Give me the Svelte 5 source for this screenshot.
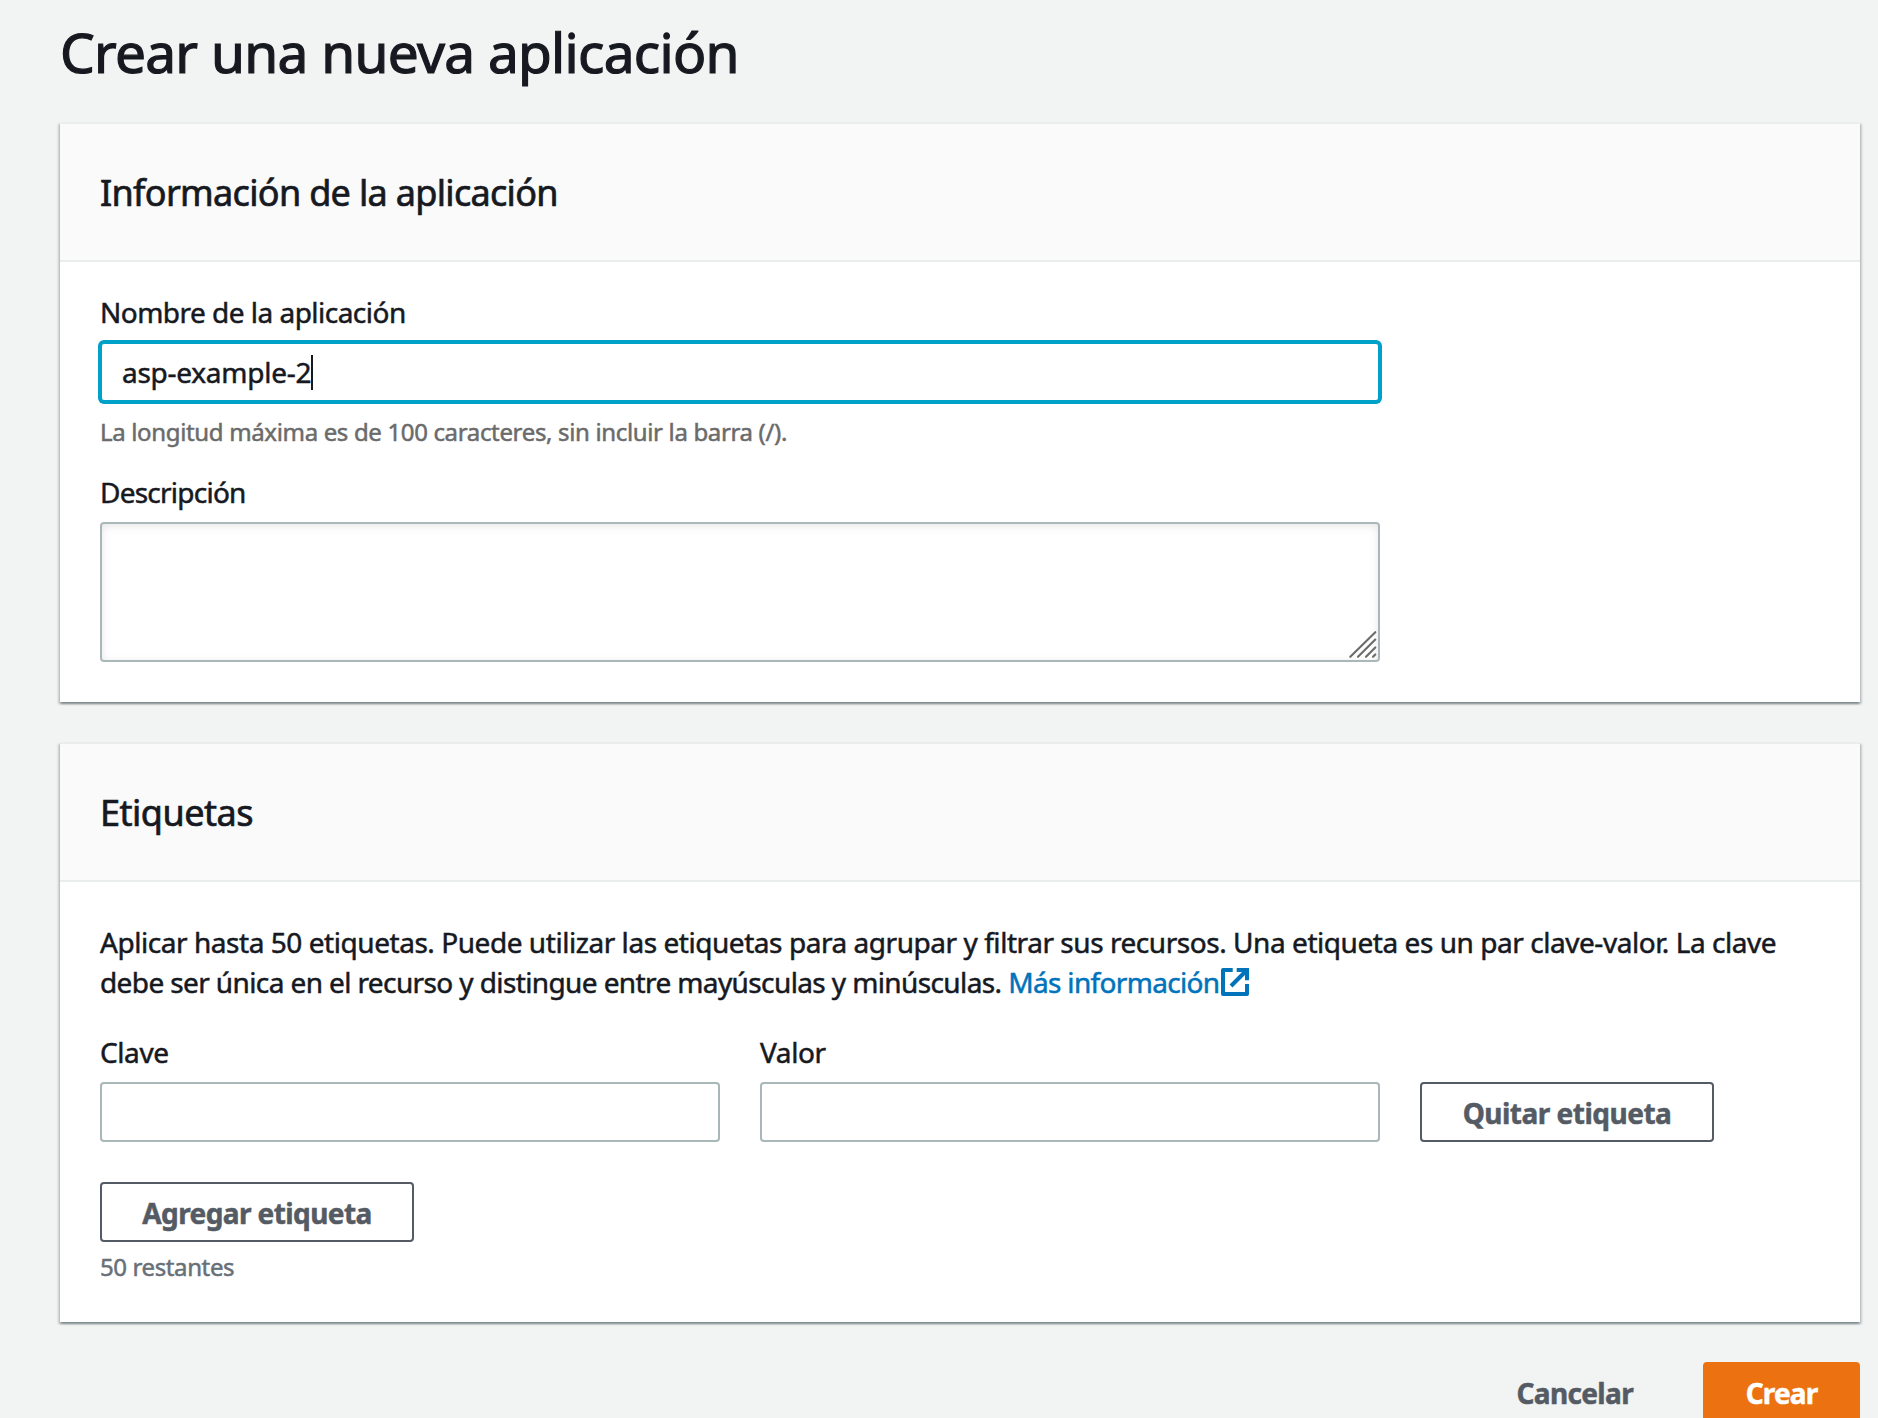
<script>
  let name = $state('asp-example-2');
  let description = $state('');
  let tags = $state([{ key: '', value: '' }]);
</script>

<main class="page">
  <h1>Crear una nueva aplicación</h1>

  <section class="card">
    <header><h2 class="info-title">Información de la aplicación</h2></header>
    <div class="body info-body">
      <div class="label">Nombre de la aplicación</div>
      <div class="input focused"><span class="typed">{name}</span><span class="caret"></span></div>
      <p class="hint limit">La longitud máxima es de 100 caracteres, sin incluir la barra (/).</p>
      <label class="label description" for="description">Descripción</label>
      <div class="textarea-wrap">
        <textarea id="description" bind:value={description}></textarea>
        <svg class="grip" viewBox="0 0 30 30" aria-hidden="true">
          <path d="M2.300 26.800 27.300 2.200M10 26.800 27.300 9.600M18 26.800 27.300 17.400M25 26.800l2.300-2.400" />
        </svg>
      </div>
    </div>
  </section>

  <section class="card">
    <header><h2>Etiquetas</h2></header>
    <div class="body tags-body">
      <p class="intro">
        <span class="line first">Aplicar hasta 50 etiquetas. Puede utilizar las etiquetas para agrupar y filtrar sus recursos. Una etiqueta es un par clave-valor. La clave</span>
        <span class="line second">debe ser única en el recurso y distingue entre mayúsculas y minúsculas. <a href="#info">Más información<svg class="external" viewBox="0 0 28 28" aria-hidden="true">
          <path class="frame" d="M11.7 0H2Q0 0 0 2v24q0 2 2 2h24q2 0 2-2V16h-4v8H4V4h7.700z" />
          <path class="frame" d="M15.700 0H28v12.300h-4V4h-8.300z" />
          <path class="shaft" d="M10 18 25.500 2.500" />
        </svg></a></span>
      </p>
      {#each tags as tag}
        <div class="tag-row">
          <label><span class="label short">Clave</span><input class="input" bind:value={tag.key} /></label>
          <label><span class="label short">Valor</span><input class="input" bind:value={tag.value} /></label>
          <button class="button remove">Quitar etiqueta</button>
        </div>
      {/each}
      <button class="button add">Agregar etiqueta</button>
      <p class="hint remaining">50 restantes</p>
    </div>
  </section>

  <footer>
    <button class="button cancel">Cancelar</button>
    <button class="button create">Crear</button>
  </footer>
</main>

<style>
  :global(body) {
    background: #f2f3f3;
    overflow: hidden;
  }
  .page {
    box-sizing: border-box;
    height: 1418px;
    overflow: hidden;
    padding: 16px 18px 0 60px;
    font-family: "Noto Sans", "Open Sans", sans-serif;
    font-size: 28px;
    line-height: 40px;
    color: #16191f;
    -webkit-text-stroke: 0.5px;
  }
  h1, h2, p { margin: 0; font-weight: 400; }
  h1 {
    font-size: 55px;
    line-height: 72px;
    letter-spacing: -0.72px;
    margin-bottom: 34px;
    -webkit-text-stroke: 1.2px;
  }
  .card {
    background: #fff;
    border-top: 2px solid #eaeded;
    box-shadow: 0 2px 2px 0 rgba(0, 28, 36, 0.3), 2px 2px 2px 0 rgba(0, 28, 36, 0.15), -2px 2px 2px 0 rgba(0, 28, 36, 0.15);
    margin-bottom: 40px;
  }
  .card header {
    background: #fafafa;
    border-bottom: 2px solid #eaeded;
    padding: 47px 40px 45px;
  }
  h2 {
    font-size: 36px;
    line-height: 44px;
    letter-spacing: -0.5px;
    -webkit-text-stroke: 0.7px;
  }
  .info-title { letter-spacing: -0.68px; }
  .info-body { padding: 30px 40px 40px; }
  .tags-body { padding: 40px 40px 39px; }
  .label { display: block; margin-bottom: 10px; letter-spacing: -0.52px; }
  .label.description { margin-top: 24px; letter-spacing: -0.76px; }
  .label.short { letter-spacing: -0.4px; }
  .input {
    display: block;
    box-sizing: border-box;
    width: 100%;
    height: 60px;
    margin: 0;
    padding: 0 20px;
    border: 2px solid #aab7b8;
    border-radius: 4px;
    background: #fff;
    font: inherit;
    outline: none;
  }
  .input.focused {
    display: flex;
    align-items: center;
    width: 1280px;
    border-color: #00a1c9;
    box-shadow: 0 0 0 2px #00a1c9;
  }
  .typed { letter-spacing: -0.26px; }
  .caret { width: 2px; height: 35px; background: #16191f; }
  .hint { font-size: 24px; line-height: 32px; color: #687078; }
  .limit { margin-top: 14px; letter-spacing: -0.345px; color: #6b6b6b; }
  .remaining { margin-top: 9px; letter-spacing: -0.39px; }
  .textarea-wrap { position: relative; width: 1280px; height: 140px; }
  textarea {
    display: block;
    box-sizing: border-box;
    width: 100%;
    height: 100%;
    padding: 10px 20px;
    border: 2px solid #aab7b8;
    border-radius: 4px;
    background: #fff;
    box-shadow: inset 0 2px 8px rgba(0, 0, 0, 0.1);
    resize: none;
    font: inherit;
    outline: none;
  }
  .grip {
    position: absolute;
    right: 2px;
    bottom: 2px;
    width: 30px;
    height: 30px;
    fill: none;
    stroke: #6b6b6b;
    stroke-width: 2.1;
    stroke-linecap: round;
  }
  .line { display: block; white-space: nowrap; }
  .first { letter-spacing: -0.45px; }
  .second { letter-spacing: -0.61px; }
  a { color: #0073bb; text-decoration: none; letter-spacing: -0.66px; }
  .external { width: 28px; height: 28px; margin-left: 1px; vertical-align: -3px; }
  .frame { fill: #0073bb; }
  .shaft { fill: none; stroke: #0073bb; stroke-width: 4; }
  .tag-row {
    display: grid;
    grid-template-columns: 620px 620px max-content;
    column-gap: 40px;
    align-items: end;
    margin: 30px 0 40px;
  }
  .button {
    box-sizing: border-box;
    height: 60px;
    margin: 0;
    padding: 1px 0 0;
    border: 2px solid #545b64;
    border-radius: 4px;
    background: #fff;
    color: #545b64;
    font: inherit;
    font-weight: 700;
    -webkit-text-stroke: 0.5px;
    display: block;
  }
  .remove { width: 294px; letter-spacing: -0.5px; }
  .add { width: 314px; letter-spacing: -0.58px; }
  footer { display: flex; justify-content: flex-end; gap: 28px; }
  .cancel { padding: 1px 40px 0; border-color: transparent; background: transparent; letter-spacing: -0.65px; }
  .create { width: 157px; border-color: #ec7211; background: #ec7211; color: #fff; letter-spacing: -0.85px; }
</style>
